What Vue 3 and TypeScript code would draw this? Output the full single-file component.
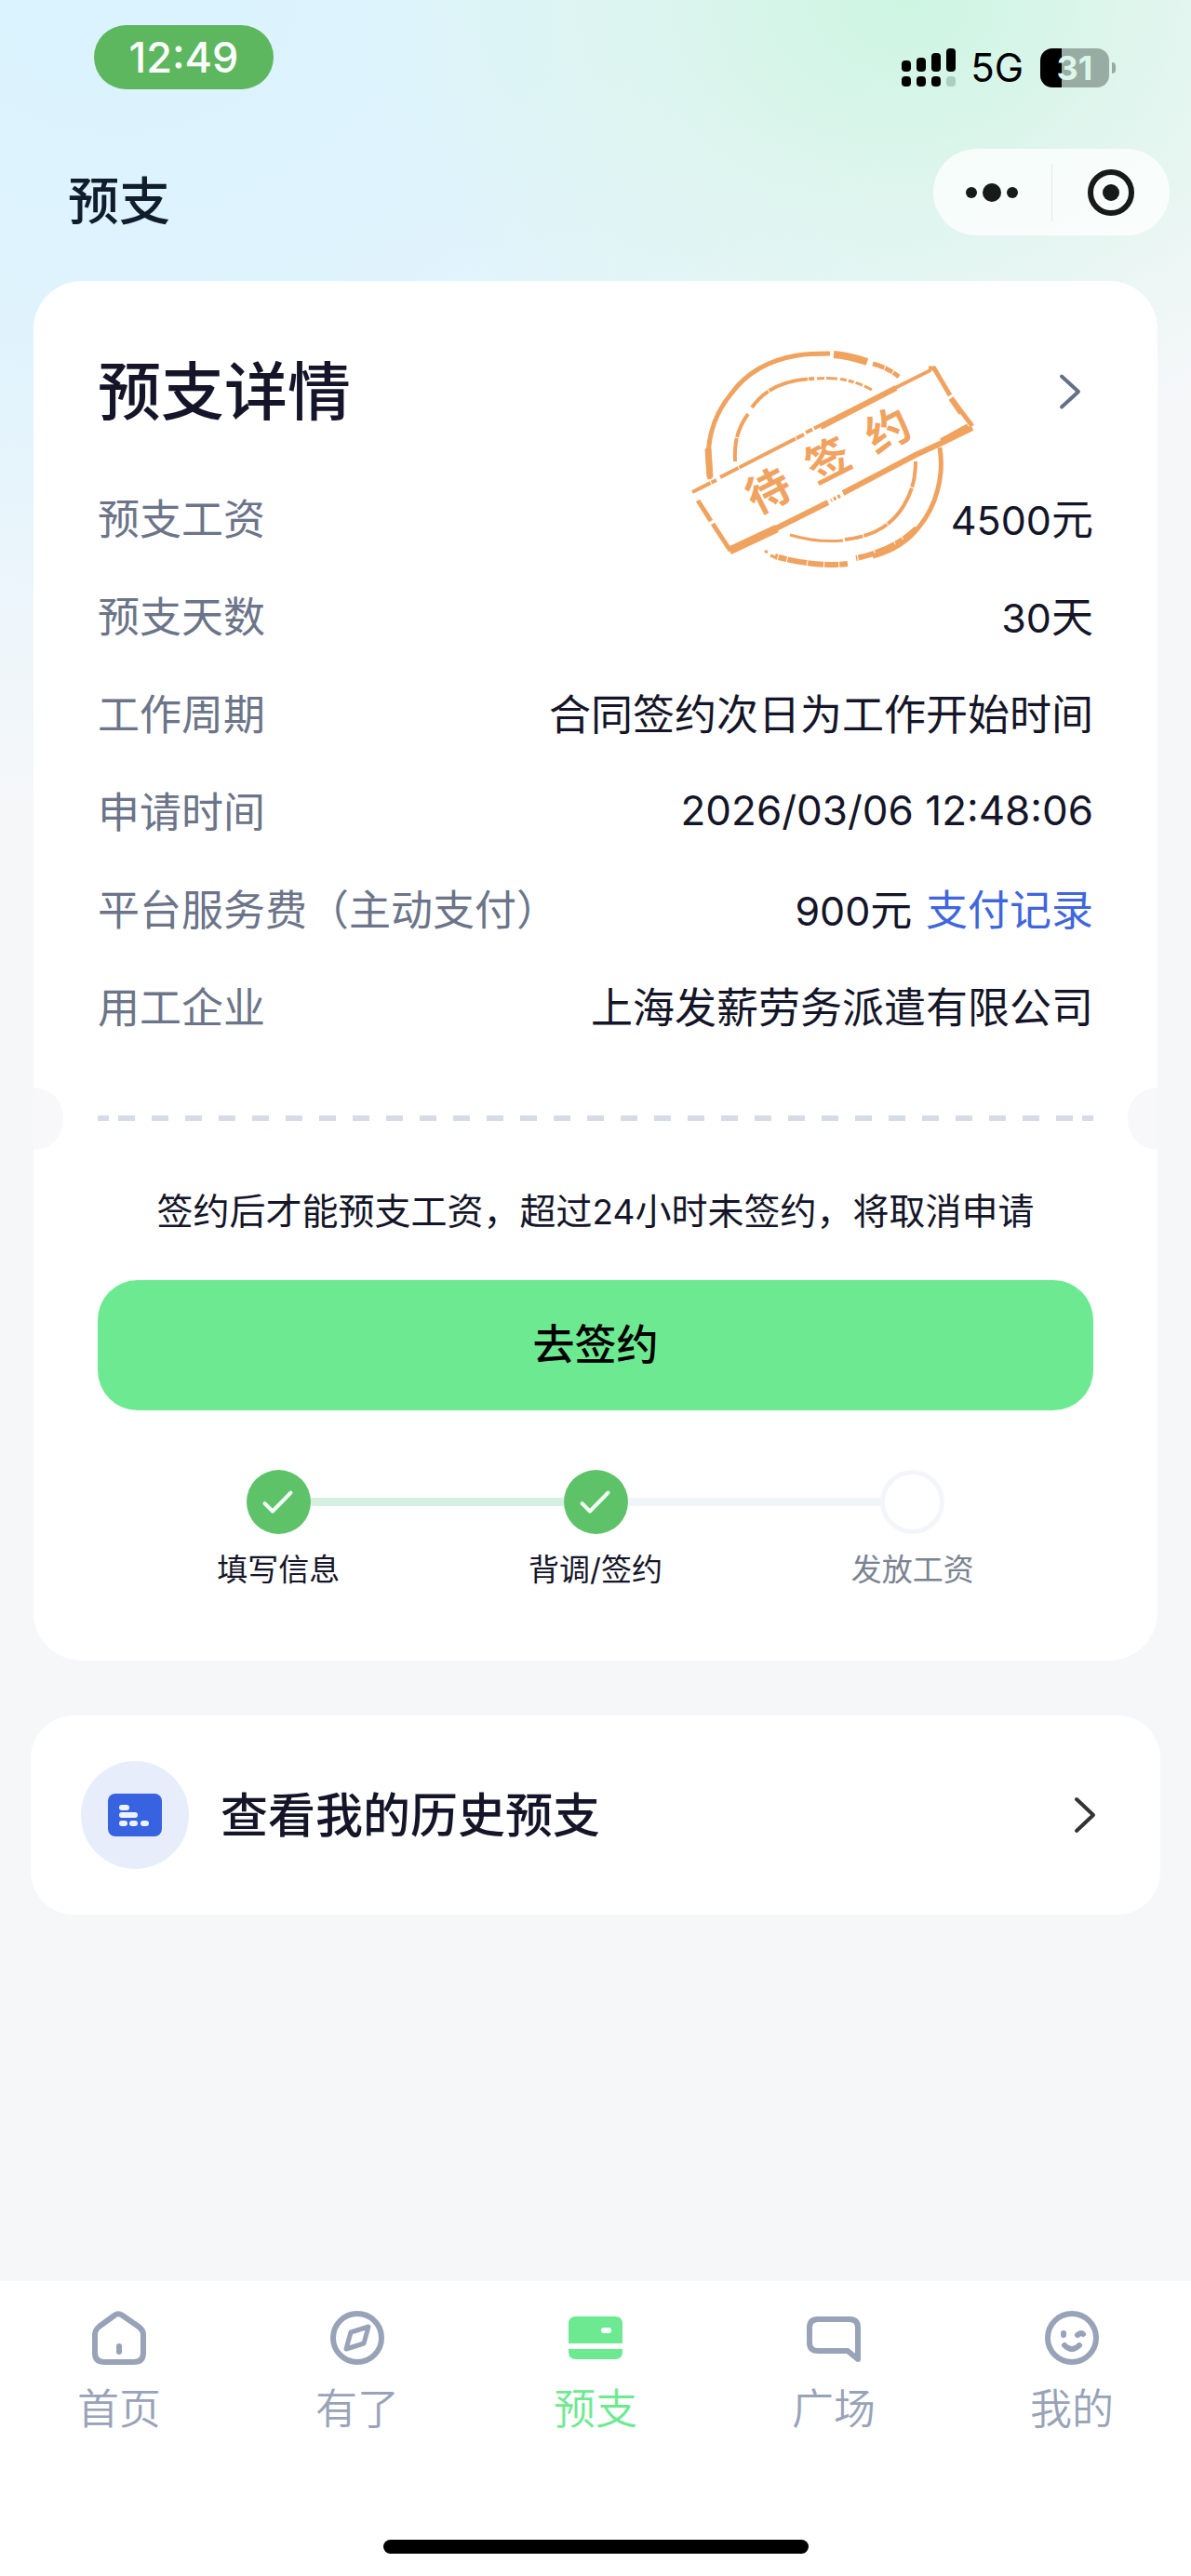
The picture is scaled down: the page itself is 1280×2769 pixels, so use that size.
<script setup lang="ts">
interface DetailRow {
  label: string
  digits?: string
  time?: string
  text?: string
  link?: string
}

interface Step {
  label: string
  done: boolean
  before: string
  after: string
}

interface Tab {
  id: string
  label: string
}

const rows: DetailRow[] = [
  { label: '预支工资', digits: '4500', text: '元' },
  { label: '预支天数', digits: '30', text: '天' },
  { label: '工作周期', text: '合同签约次日为工作开始时间' },
  { label: '申请时间', time: '2026/03/06 12:48:06' },
  { label: '平台服务费（主动支付）', digits: '900', text: '元', link: '支付记录' },
  { label: '用工企业', text: '上海发薪劳务派遣有限公司' },
]

const steps: Step[] = [
  { label: '填写信息', done: true, before: 'none', after: 'passed' },
  { label: '背调/签约', done: true, before: 'passed', after: 'pending' },
  { label: '发放工资', done: false, before: 'pending', after: 'none' },
]

const tabs: Tab[] = [
  { id: 'home', label: '首页' },
  { id: 'found', label: '有了' },
  { id: 'advance', label: '预支' },
  { id: 'square', label: '广场' },
  { id: 'mine', label: '我的' },
]

const activeTab = 'advance'
</script>

<template>
  <div class="app">
    <header>
      <div class="status">
        <span class="clock">12:49</span>
        <div class="signals">
          <svg class="bars" width="58" height="42" viewBox="0 0 58 42" aria-hidden="true">
            <rect x="0" y="13" width="10" height="12" rx="4" />
            <rect x="16" y="10" width="10" height="15" rx="4" />
            <rect x="32" y="5" width="10" height="20" rx="4" />
            <rect x="48" y="0" width="10" height="25" rx="4" />
            <rect x="0" y="30" width="10" height="11" rx="4" />
            <rect x="16" y="30" width="10" height="11" rx="4" />
            <rect x="32" y="30" width="10" height="11" rx="4" />
            <rect x="48" y="30" width="10" height="11" rx="4" fill="#a9cfbf" />
          </svg>
          <span class="network">5G</span>
          <span class="battery"><span class="level">31</span></span>
        </div>
      </div>
      <div class="nav">
        <h1>预支</h1>
        <div class="capsule">
          <button type="button" aria-label="更多">
            <svg width="60" height="60" viewBox="0 0 60 60">
              <circle cx="8" cy="30" r="6" />
              <circle cx="30" cy="30" r="10" />
              <circle cx="52" cy="30" r="6" />
            </svg>
          </button>
          <span class="split"></span>
          <button type="button" aria-label="关闭">
            <svg width="60" height="60" viewBox="0 0 60 60">
              <circle cx="30" cy="30" r="22" fill="none" stroke="#171a19" stroke-width="6" />
              <circle cx="30" cy="30" r="9" />
            </svg>
          </button>
        </div>
      </div>
    </header>

    <main>
      <section class="card detail">
        <div class="card-head">
          <h2>预支详情</h2>
          <a href="#detail" aria-label="查看详情">
            <svg width="50" height="50" viewBox="0 0 50 50" fill="none" stroke="#667085" stroke-width="4" stroke-linecap="round" stroke-linejoin="round">
              <path d="M16 8.500L34 25L16 41.500" />
            </svg>
          </a>
        </div>

        <svg class="stamp" width="310" height="245" viewBox="740 370 310 245" fill="none" stroke="#f0a25f" role="img" aria-label="待签约">
          <g stroke-linejoin="round">
            <path d="M763 515C757 477 766 447 786 423C802 401 827 387 857 382C868 380 880 380 892 380" stroke-width="5" />
            <path d="M761 482L763 513" stroke-width="7" />
            <path d="M896 381C908 382 920 385 932 389" stroke-width="8" />
            <path d="M938 391Q954 395 966 405" stroke-width="5" stroke-dasharray="13 1 9 1" />
            <path d="M1010 481C1015 512 1006 544 988 566C975 583 957 593 938 598" stroke-width="5" />
            <path d="M985 568Q960 592 920 600" stroke-width="6" stroke-dasharray="18 1 9 1 23 1" />
            <path d="M911 606C887 609 858 605 833 598" stroke-width="6" stroke-dasharray="9 1 15 1 17 1 21 1" />
            <path d="M822 592l3 2M828 597l5 2" stroke-width="3" />
            <path d="M790 496C789 475 793 460 804 445M808 438C823 417 845 408 875 407" stroke-width="4" stroke-dasharray="25 1 44 1" />
            <path d="M878 407Q910 404 937 419" stroke-width="3" stroke-dasharray="8 2 12 3 7 2 6 2" />
            <path d="M984 496C984 515 980 529 971 544C956 568 934 577 908 580" stroke-width="4" stroke-dasharray="28 1 47 1" />
            <path d="M906 581C885 583 866 580 849 575" stroke-width="3" />
          </g>
          <path d="M744 529L770 516M774 513L864 467" stroke-width="4" stroke-dasharray="22 1 68 1" />
          <path d="M866 465L1000 398" stroke-width="4" stroke-dasharray="8 2 140 1" />
          <path d="M882 459L963 417" stroke-width="6" />
          <path d="M998 396L1004 396L1021 425M1023 429L1045 458" stroke-width="5" />
          <path d="M1022 428L1033 444" stroke-width="6" />
          <path d="M1045 460L1010 477L984 489L906 530" stroke-width="6" />
          <path d="M1041 459L1012 475" stroke-width="8" />
          <path d="M903 533L893 538" stroke-width="4" stroke-dasharray="3 2" />
          <path d="M890 540L824 573" stroke-width="6" />
          <path d="M835 568L784 592" stroke-width="9" />
          <path d="M750 538L764 560M766 563L785 592" stroke-width="5" />
          <g class="stamp-text" transform="rotate(-27 890 495)">
            <text x="818" y="512">待</text>
            <text x="890" y="512">签</text>
            <text x="962" y="512">约</text>
          </g>
        </svg>

        <dl>
          <div v-for="row in rows" :key="row.label" class="row">
            <dt>{{ row.label }}</dt>
            <dd>
              <time v-if="row.time">{{ row.time }}</time>
              <span v-if="row.digits" class="digits">{{ row.digits }}</span>{{ row.text }}
              <a v-if="row.link" href="#payments">{{ row.link }}</a>
            </dd>
          </div>
        </dl>

        <div class="tear"></div>

        <p class="notice">签约后才能预支工资，超过<span class="digits">24</span>小时未签约，将取消申请</p>
        <button type="button" class="primary">去签约</button>

        <ol class="steps">
          <li v-for="step in steps" :key="step.label" :class="{ todo: !step.done }">
            <div class="track">
              <span class="line" :class="step.before"></span>
              <span class="dot">
                <svg v-if="step.done" width="40" height="40" viewBox="0 0 40 40" fill="none" stroke="#f2fff5" stroke-width="4" stroke-linecap="round" stroke-linejoin="round" aria-hidden="true">
                  <path d="M5.500 21L14 29.500L33.500 9.500" />
                </svg>
              </span>
              <span class="line" :class="step.after"></span>
            </div>
            <span class="step-label">{{ step.label }}</span>
          </li>
        </ol>
      </section>

      <a class="card history" href="#history">
        <span class="badge">
          <svg width="58" height="46" viewBox="0 0 58 46" aria-hidden="true">
            <rect width="58" height="46" rx="8" fill="#3762e0" />
            <g fill="#edf2ff">
              <rect x="12" y="12" width="11" height="6" rx="3" />
              <rect x="12" y="20" width="20" height="6" rx="3" />
              <rect x="12" y="29" width="9" height="6" rx="3" />
              <rect x="23" y="29" width="9" height="6" rx="3" />
              <rect x="35" y="29" width="9" height="6" rx="3" />
            </g>
          </svg>
        </span>
        <span class="history-label">查看我的历史预支</span>
        <svg width="50" height="50" viewBox="0 0 50 50" fill="none" stroke="#333333" stroke-width="4" stroke-linecap="round" stroke-linejoin="round" aria-hidden="true">
          <path d="M16 8L34 25L16 42" />
        </svg>
      </a>
    </main>

    <footer>
      <nav class="tabs">
        <a v-for="tab in tabs" :key="tab.id" :href="'#' + tab.id" :class="{ active: tab.id === activeTab }">
          <svg width="58" height="58" viewBox="0 0 58 58" fill="none" stroke="currentColor" stroke-width="6" stroke-linecap="round" stroke-linejoin="round" aria-hidden="true">
            <template v-if="tab.id === 'home'">
              <path d="M24.500 4.500Q28 2 32 4.500L50 17Q55 20.500 55 26V45Q55 55 45 55H13Q3 55 3 45V26Q3 20.500 8 16.500Z" />
              <path d="M29 38V44" />
            </template>
            <template v-else-if="tab.id === 'found'">
              <circle cx="29" cy="29" r="26" />
              <path d="M41 17L36 35L17 41L22 23Z" stroke-width="5" />
            </template>
            <template v-else-if="tab.id === 'advance'">
              <path d="M8 6H50Q58 6 58 14V35H0V14Q0 6 8 6ZM0 41H58V44Q58 52 50 52H8Q0 52 0 44Z" fill="currentColor" stroke="none" />
              <rect x="35" y="18" width="11" height="6" rx="3" fill="#ffffff" stroke="none" />
            </template>
            <template v-else-if="tab.id === 'square'">
              <path d="M12 9H46Q55 9 55 18V52L44 43H12Q3 43 3 34V18Q3 9 12 9Z" />
            </template>
            <template v-else>
              <circle cx="29" cy="29" r="26" />
              <path d="M20 24V26M35 26Q39 23 41 25M21 37Q29 45 37 37" />
            </template>
          </svg>
          <span>{{ tab.label }}</span>
        </a>
      </nav>
      <div class="home-indicator"></div>
    </footer>
  </div>
</template>

<style>
body {
  margin: 0;
}
</style>

<style scoped>
.app {
  display: flex;
  flex-direction: column;
  min-height: 100vh;
  font-family: Inter, 'Noto Sans CJK SC', sans-serif;
  font-size: 45px;
  color: #141528;
  background:
    radial-gradient(ellipse 600px 480px at 76% 0, #cdf5e2, rgba(218, 245, 234, 0.75) 45%, rgba(240, 247, 247, 0)),
    radial-gradient(ellipse 1150px 860px at 10% 0, #daf3fe, #dff3fd 40%, rgba(245, 247, 250, 0)),
    #f5f7f9;
}

h1,
h2,
dl,
dd,
p,
ol {
  margin: 0;
  padding: 0;
}

a {
  color: inherit;
  text-decoration: none;
}

button {
  border: 0;
  padding: 0;
  background: none;
  font-family: inherit;
  cursor: pointer;
}

svg {
  display: block;
  flex: none;
}

.digits {
  font-size: 43px;
}

time {
  font-size: 44px;
}

.status {
  display: flex;
  justify-content: space-between;
  align-items: flex-start;
  padding: 27px 81px 0 101px;
}

.clock {
  width: 193px;
  line-height: 69px;
  border-radius: 35px;
  background: #5db75f;
  color: #ffffff;
  font-size: 45px;
  font-weight: 500;
  text-align: center;
}

.signals {
  display: flex;
  align-items: center;
  padding-top: 25px;
  color: #000000;
}

.network {
  margin: 0 18px 0 16px;
  font-size: 42px;
  line-height: 42px;
}

.battery {
  display: flex;
  align-items: center;
}

.battery::after {
  content: '';
  width: 4px;
  height: 12px;
  margin-left: 3px;
  border-radius: 0 4px 4px 0;
  background: #98aca3;
}

.level {
  width: 74px;
  line-height: 42px;
  border-radius: 13px;
  background: linear-gradient(90deg, #000000 23px, #98aca3 23px);
  color: #dcf7ea;
  font-size: 36px;
  font-weight: 700;
  text-align: center;
}

.nav {
  display: flex;
  justify-content: space-between;
  align-items: flex-start;
  padding: 64px 23px 32px 73px;
}

h1 {
  font-size: 55px;
  font-weight: 500;
  line-height: 112px;
  height: 110px;
  color: #101d2c;
}

.capsule {
  display: flex;
  align-items: center;
  width: 254px;
  height: 93px;
  border-radius: 47px;
  background: rgba(255, 255, 255, 0.75);
}

.capsule button {
  flex: 1;
  display: flex;
  justify-content: center;
}

.capsule svg {
  fill: #171a19;
}

.split {
  width: 1px;
  height: 62px;
  background: #e0e8e4;
}

main {
  flex: 1;
}

.card {
  background: #ffffff;
}

.detail {
  position: relative;
  margin: 0 36px;
  padding: 77px 69px 76px;
  border-radius: 52px;
}

.card-head {
  display: flex;
  justify-content: space-between;
  align-items: center;
  height: 84px;
  margin-bottom: 40px;
}

h2 {
  font-size: 68px;
  font-weight: 500;
  line-height: 84px;
}

.stamp {
  position: absolute;
  top: 68px;
  right: 194px;
}

.stamp-text {
  fill: #f0a25f;
  stroke: none;
  font-size: 47px;
  font-weight: 700;
  text-anchor: middle;
}

.row {
  display: flex;
  justify-content: space-between;
  align-items: center;
  height: 105px;
}

dt {
  color: #6b7488;
}

dd a {
  margin-left: 2px;
  color: #3f66dd;
}

.tear {
  display: flex;
  justify-content: space-between;
  align-items: center;
  height: 6px;
  margin: 66px -69px 0;
  background:
    linear-gradient(#d5dce5, #d5dce5) 69px 0 / 12px 6px no-repeat,
    linear-gradient(#d5dce5, #d5dce5) right 69px top 0 / 12px 6px no-repeat,
    linear-gradient(90deg, transparent 9px, #d5dce5 9px, #d5dce5 27px, transparent 27px) center / 36px 6px repeat-x content-box;
  padding: 0 69px;
}

.tear::before,
.tear::after {
  content: '';
  flex: none;
  width: 32px;
  height: 67px;
  background: #f8f8fa;
}

.tear::before {
  margin-left: -69px;
  border-radius: 0 34px 34px 0;
}

.tear::after {
  margin-right: -69px;
  border-radius: 34px 0 0 34px;
}

.notice {
  margin-top: 67px;
  font-size: 39px;
  line-height: 60px;
  text-align: center;
}

.notice .digits {
  font-size: 37px;
}

.primary {
  display: block;
  width: 100%;
  height: 140px;
  margin-top: 43px;
  padding-bottom: 8px;
  border-radius: 43px;
  background: #6dea91;
  color: #000000;
  font-size: 45px;
  font-weight: 500;
}

.steps {
  display: grid;
  grid-template-columns: repeat(3, 1fr);
  margin: 64px 24px 0;
  list-style: none;
}

.track {
  display: flex;
  align-items: center;
}

.line {
  flex: 1;
  height: 9px;
}

.passed {
  background: #d6f0df;
}

.pending {
  background: #f1f5fa;
}

.dot {
  display: flex;
  justify-content: center;
  align-items: center;
  box-sizing: border-box;
  width: 69px;
  height: 69px;
  border-radius: 50%;
  background: #5ec269;
}

.todo .dot {
  border: 5px solid #f3f5fa;
  background: #ffffff;
}

.step-label {
  display: block;
  margin-top: 16px;
  font-size: 33px;
  line-height: 44px;
  text-align: center;
}

.todo .step-label {
  color: #7a8391;
}

.history {
  display: flex;
  align-items: center;
  height: 214px;
  margin: 59px 33px 0;
  padding: 0 56px 0 54px;
  border-radius: 46px;
  box-sizing: border-box;
}

.badge {
  display: flex;
  justify-content: center;
  align-items: center;
  width: 116px;
  height: 116px;
  border-radius: 50%;
  background: #e8edfb;
}

.history-label {
  flex: 1;
  margin-left: 34px;
  padding-bottom: 6px;
  font-size: 51px;
  font-weight: 500;
}

footer {
  background: #ffffff;
  padding: 32px 0 24px;
}

.tabs {
  display: grid;
  grid-template-columns: repeat(5, 1fr);
}

.tabs a {
  display: flex;
  flex-direction: column;
  align-items: center;
  gap: 18px;
  line-height: 60px;
  font-weight: 350;
  color: #98a3b8;
}

.tabs .active {
  color: #6dea91;
}

.home-indicator {
  width: 457px;
  height: 15px;
  margin: 110px auto 0;
  border-radius: 8px;
  background: #000000;
}
</style>
